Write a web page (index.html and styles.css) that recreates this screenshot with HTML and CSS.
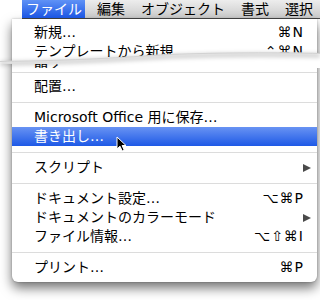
FILE: index.html
```html
<!DOCTYPE html>
<html lang="ja">
<head>
    <meta charset="UTF-8">
    <meta name="viewport" content="width=device-width, initial-scale=1.0">
    <title>ファイル メニュー</title>
    <link rel="stylesheet" href="styles.css">
</head>
<body>

<div class="screen">
    <div class="menubar">
        <span class="bar-item active">ファイル</span>
        <span class="bar-item">編集</span>
        <span class="bar-item">オブジェクト</span>
        <span class="bar-item">書式</span>
        <span class="bar-item">選択</span>
    </div>

    <div class="menu">
        <!-- partie haute, coupée par la déchirure -->
        <div class="menu-top">
            <div class="row"><span>新規…</span><span class="key">⌘N</span></div>
            <div class="row"><span>テンプレートから新規…</span><span class="key">⌃⌘N</span></div>
            <div class="row"><span>開く…</span></div>
        </div>

        <div class="menu-bottom">
            <div class="tear-line"></div>
            <div class="row"><span>配置…</span></div>
            <div class="sep"></div>
            <div class="row"><span>Microsoft Office 用に保存…</span></div>
            <div class="row selected"><span>書き出し…</span></div>
            <div class="sep"></div>
            <div class="row"><span>スクリプト</span><span class="arrow"></span></div>
            <div class="sep"></div>
            <div class="row"><span>ドキュメント設定…</span><span class="key">⌥⌘P</span></div>
            <div class="row"><span>ドキュメントのカラーモード</span><span class="arrow"></span></div>
            <div class="row"><span>ファイル情報…</span><span class="key">⌥⇧⌘I</span></div>
            <div class="sep"></div>
            <div class="row"><span>プリント…</span><span class="key">⌘P</span></div>
        </div>
    </div>

    <svg class="tear" width="320" height="30" viewBox="0 0 320 30">
        <defs>
            <filter id="soft" x="-5%" y="-100%" width="110%" height="300%">
                <feGaussianBlur stdDeviation="2"/>
            </filter>
        </defs>
        <path d="M0,17 C80,16 120,13 170,10 C220,8 280,8 320,9 L320,24 L66,24 L66,19.5 L0,20 Z" fill="#fff"/>
        <path d="M0,19.5 C80,18.5 120,15.5 170,12.5 C220,10.5 280,10.5 320,11.5" fill="none" stroke="#000" stroke-opacity="0.2" stroke-width="4" filter="url(#soft)"/>
        <path d="M0,17.5 C80,16.5 120,13.5 170,10.5 C220,8.5 280,8.5 320,9.5" fill="none" stroke="#d2d2d2" stroke-width="1"/>
    </svg>

    <svg class="cursor" width="12" height="17" viewBox="0 0 12 17">
        <path d="M1,1 L1,13 L4,10.2 L6.2,15 L8.2,14.1 L6.1,9.5 L10,9.5 Z" fill="#000" stroke="#fff" stroke-width="1"/>
    </svg>
</div>

</body>
</html>
```

FILE: styles.css
```css
body {
    margin: 0;
    padding: 0;
    background-color: #ffffff;
    font-family: "DejaVu Sans", "Noto Sans CJK JP", sans-serif;
    font-size: 14px;
    color: #000;
}
.screen {
    position: relative;
    width: 320px;
    height: 300px;
    overflow: hidden;
}
.menubar {
    display: flex;
    gap: 8px;
    margin-left: 22px;
    height: 18px;
    line-height: 18px;
    background: linear-gradient(#ededed, #cbcbcb);
    border-bottom: 1px solid #4a4a4a;
    white-space: nowrap;
}
.bar-item {
    padding: 0 4px;
}
.bar-item.active {
    padding: 0 3px 0 4px;
    background: linear-gradient(#5f92f6, #1b56e4);
    color: #fff;
}
.menu {
    margin-left: 12px;
    width: 305px;
    background-color: #fff;
    border-radius: 0 0 6px 6px;
    box-shadow: 0 6px 12px rgba(0, 0, 0, 0.55), 0 0 2px rgba(0, 0, 0, 0.3);
}
.menu-top {
    height: 49px;
    padding-top: 4px;
    box-sizing: border-box;
    overflow: hidden;
}
.menu-bottom {
    padding-bottom: 5px;
}
.row {
    display: flex;
    justify-content: space-between;
    align-items: center;
    height: 19px;
    line-height: 19px;
    padding: 0 13px 0 22px;
    white-space: nowrap;
}
.row.selected {
    background: linear-gradient(#6893f3, #1e59e6);
    color: #fff;
}
.key {
    letter-spacing: 1px;
}
.arrow {
    width: 0;
    height: 0;
    margin-right: -7px;
    border-left: 8px solid #4a4a4a;
    border-top: 4.5px solid transparent;
    border-bottom: 4.5px solid transparent;
}
.sep {
    height: 12px;
    display: flex;
    align-items: center;
}
.sep::before, .tear-line::before {
    content: "";
    display: block;
    width: 100%;
    height: 1px;
    background-color: #dcdcdc;
}
.tear-line {
    height: 9px;
    padding-top: 4px;
    box-sizing: border-box;
}
.tear {
    position: absolute;
    left: 0;
    top: 44px;
}
.cursor {
    position: absolute;
    left: 116px;
    top: 136px;
}
```
